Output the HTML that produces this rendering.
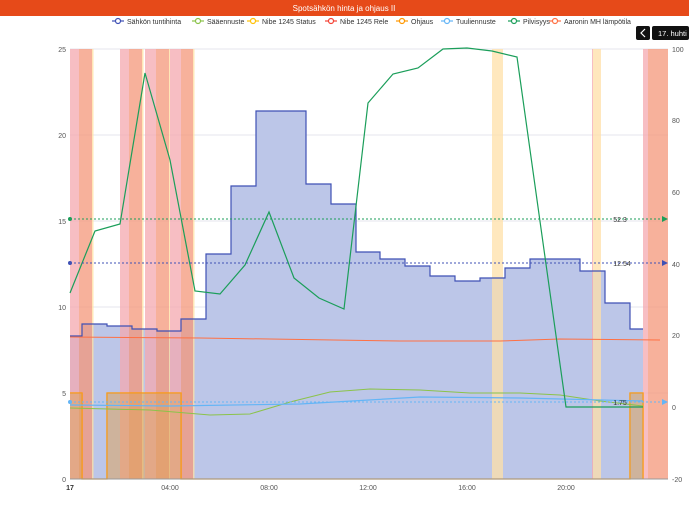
<!DOCTYPE html>
<html><head><meta charset="utf-8"><style>
body{margin:0;width:689px;height:500px;overflow:hidden;background:#fff;font-family:"Liberation Sans",sans-serif}
</style></head><body>
<svg width="689" height="500" xmlns="http://www.w3.org/2000/svg" font-family="Liberation Sans, sans-serif">
<rect x="0" y="0" width="689" height="16" fill="#e64a19"/>
<text x="344" y="11" font-size="8" fill="#fff" text-anchor="middle">Spotsähkön hinta ja ohjaus II</text>
<g font-size="7" fill="#333">
<g fill="none" stroke-width="1.2">
<line x1="112" y1="21" x2="124" y2="21" stroke="#3f51b5"/><circle cx="118" cy="21" r="2.5" stroke="#3f51b5" fill="#fff"/>
<line x1="192" y1="21" x2="204" y2="21" stroke="#8bc34a"/><circle cx="198" cy="21" r="2.5" stroke="#8bc34a" fill="#fff"/>
<line x1="247" y1="21" x2="259" y2="21" stroke="#ffc107"/><circle cx="253" cy="21" r="2.5" stroke="#ffc107" fill="#fff"/>
<line x1="325" y1="21" x2="337" y2="21" stroke="#f44336"/><circle cx="331" cy="21" r="2.5" stroke="#f44336" fill="#fff"/>
<line x1="396" y1="21" x2="408" y2="21" stroke="#ff9800"/><circle cx="402" cy="21" r="2.5" stroke="#ff9800" fill="#fff"/>
<line x1="441" y1="21" x2="453" y2="21" stroke="#64b5f6"/><circle cx="447" cy="21" r="2.5" stroke="#64b5f6" fill="#fff"/>
<line x1="508" y1="21" x2="520" y2="21" stroke="#1b9e5a"/><circle cx="514" cy="21" r="2.5" stroke="#1b9e5a" fill="#fff"/>
<line x1="549" y1="21" x2="561" y2="21" stroke="#ff7043"/><circle cx="555" cy="21" r="2.5" stroke="#ff7043" fill="#fff"/>
</g>
<text x="127" y="24">Sähkön tuntihinta</text>
<text x="207" y="24">Sääennuste</text>
<text x="262" y="24">Nibe 1245 Status</text>
<text x="340" y="24">Nibe 1245 Rele</text>
<text x="411" y="24">Ohjaus</text>
<text x="456" y="24">Tuuliennuste</text>
<text x="523" y="24">Pilvisyys</text>
<text x="564" y="24">Aaronin MH lämpötila</text>
</g>
<rect x="636" y="26" width="14" height="14" rx="2" fill="#111"/>
<path d="M645 29 L641 33 L645 37" stroke="#fff" fill="none" stroke-width="1.2"/>
<rect x="652" y="26" width="37" height="14" rx="2" fill="#111"/>
<text x="658" y="36" font-size="7.5" fill="#fff">17. huhti</text>
<!-- grid -->
<g stroke="#e6e6ee" stroke-width="1">
<line x1="70" y1="49" x2="668" y2="49"/><line x1="70" y1="135" x2="668" y2="135"/><line x1="70" y1="221" x2="668" y2="221"/><line x1="70" y1="307" x2="668" y2="307"/><line x1="70" y1="393" x2="668" y2="393"/>
</g>
<!-- price fill -->
<path d="M70 336 H82 V324 H107 V326 H132 V329 H157 V331 H181 V319 H206 V254 H231 V186 H256 V111 H306 V184 H331 V204 H356 V252 H380 V259 H405 V266 H430 V276 H455 V281 H480 V278 H505 V268 H530 V259 H580 V271 H605 V303 H630 V329 H643 V479 H70 Z" fill="#bcc6e8"/>
<!-- bands -->
<g opacity="0.75">
<rect x="70" y="49" width="9" height="430" fill="#f5a9b0"/><rect x="79" y="49" width="13" height="430" fill="#f5977a"/><rect x="92" y="49" width="1.5" height="430" fill="#ffe0a0"/>
<rect x="120" y="49" width="9" height="430" fill="#f5a9b0"/><rect x="129" y="49" width="13" height="430" fill="#f5977a"/><rect x="142" y="49" width="1.5" height="430" fill="#ffe0a0"/>
<rect x="145" y="49" width="11" height="430" fill="#f5a9b0"/><rect x="156" y="49" width="13" height="430" fill="#f5977a"/><rect x="169" y="49" width="1.5" height="430" fill="#ffe0a0"/>
<rect x="170" y="49" width="11" height="430" fill="#f5a9b0"/><rect x="181" y="49" width="12" height="430" fill="#f5977a"/><rect x="193" y="49" width="1.5" height="430" fill="#ffe0a0"/>
<rect x="492" y="49" width="11" height="430" fill="#ffe0a8"/>
<rect x="592" y="49" width="1" height="430" fill="#f5a9b0"/><rect x="593" y="49" width="8" height="430" fill="#ffe0a8"/>
<rect x="643" y="49" width="5" height="430" fill="#f5a9b0"/><rect x="648" y="49" width="20" height="430" fill="#f5977a"/>
</g>
<!-- ohjaus -->
<path d="M70 393 H82 V479 H107 V393 H181 V479 H630 V393 H643 V479" fill="none" stroke="#ff9800" stroke-width="1.3"/>
<rect x="70" y="393" width="12" height="86" fill="#e0a050" opacity="0.5"/><rect x="107" y="393" width="74" height="86" fill="#e0a050" opacity="0.5"/><rect x="630" y="393" width="13" height="86" fill="#e0a050" opacity="0.5"/>
<!-- price line -->
<path d="M70 336 H82 V324 H107 V326 H132 V329 H157 V331 H181 V319 H206 V254 H231 V186 H256 V111 H306 V184 H331 V204 H356 V252 H380 V259 H405 V266 H430 V276 H455 V281 H480 V278 H505 V268 H530 V259 H580 V271 H605 V303 H630 V329 H643" fill="none" stroke="#3f51b5" stroke-width="1.2"/>
<!-- red line -->
<path d="M70 337 L200 338 L400 341 L500 341 L560 339 L660 340" fill="none" stroke="#ff7043" stroke-width="1"/>
<!-- saaennuste -->
<path d="M70 408 L150 410 L210 415 L250 414 L290 402 L330 392 L370 389 L420 390 L470 393 L520 393 L560 395 L600 401 L643 406" fill="none" stroke="#8bc34a" stroke-width="1"/>
<!-- tuuli -->
<path d="M70 405 L170 406 L300 404 L420 397 L520 398 L643 401" fill="none" stroke="#64b5f6" stroke-width="1.2"/>
<!-- pilvisyys -->
<path d="M70 293 L95 231 L120 224 L145 73 L170 160 L195 291 L220 294 L245 265 L269 212 L294 278 L319 298 L344 309 L368 103 L393 74 L418 68 L443 49 L467 48 L492 51 L517 57 L566 407 L643 407" fill="none" stroke="#1b9e5a" stroke-width="1.2"/>
<!-- dashed -->
<g stroke-dasharray="2,2" stroke-width="1" fill="none">
<line x1="70" y1="219" x2="662" y2="219" stroke="#1b9e5a"/>
<line x1="70" y1="263" x2="662" y2="263" stroke="#3f51b5"/>
<line x1="70" y1="402" x2="662" y2="402" stroke="#64b5f6"/>
</g>
<circle cx="70" cy="219" r="2" fill="#1b9e5a"/><circle cx="70" cy="263" r="2" fill="#3f51b5"/><circle cx="70" cy="402" r="2" fill="#64b5f6"/>
<path d="M662 216 L668 219 L662 222Z" fill="#1b9e5a"/><path d="M662 260 L668 263 L662 266Z" fill="#3f51b5"/><path d="M662 399 L668 402 L662 405Z" fill="#64b5f6"/>
<g font-size="7" fill="#333" text-anchor="middle"><text x="620" y="222">52.3</text><text x="622" y="266">12.54</text><text x="620" y="405">1.75</text></g>
<line x1="70" y1="479" x2="668" y2="479" stroke="#999"/>
<!-- axes labels -->
<g font-size="7" fill="#555" text-anchor="end">
<text x="66" y="52">25</text><text x="66" y="138">20</text><text x="66" y="224">15</text><text x="66" y="310">10</text><text x="66" y="396">5</text><text x="66" y="482">0</text>
</g>
<g font-size="7" fill="#555">
<text x="672" y="52">100</text><text x="672" y="123">80</text><text x="672" y="195">60</text><text x="672" y="267">40</text><text x="672" y="338">20</text><text x="672" y="410">0</text><text x="672" y="482">-20</text>
</g>
<g font-size="7" fill="#555" text-anchor="middle">
<text x="70" y="490" font-weight="bold" fill="#333">17</text><text x="170" y="490">04:00</text><text x="269" y="490">08:00</text><text x="368" y="490">12:00</text><text x="467" y="490">16:00</text><text x="566" y="490">20:00</text>
</g>
</svg>
</body></html>
